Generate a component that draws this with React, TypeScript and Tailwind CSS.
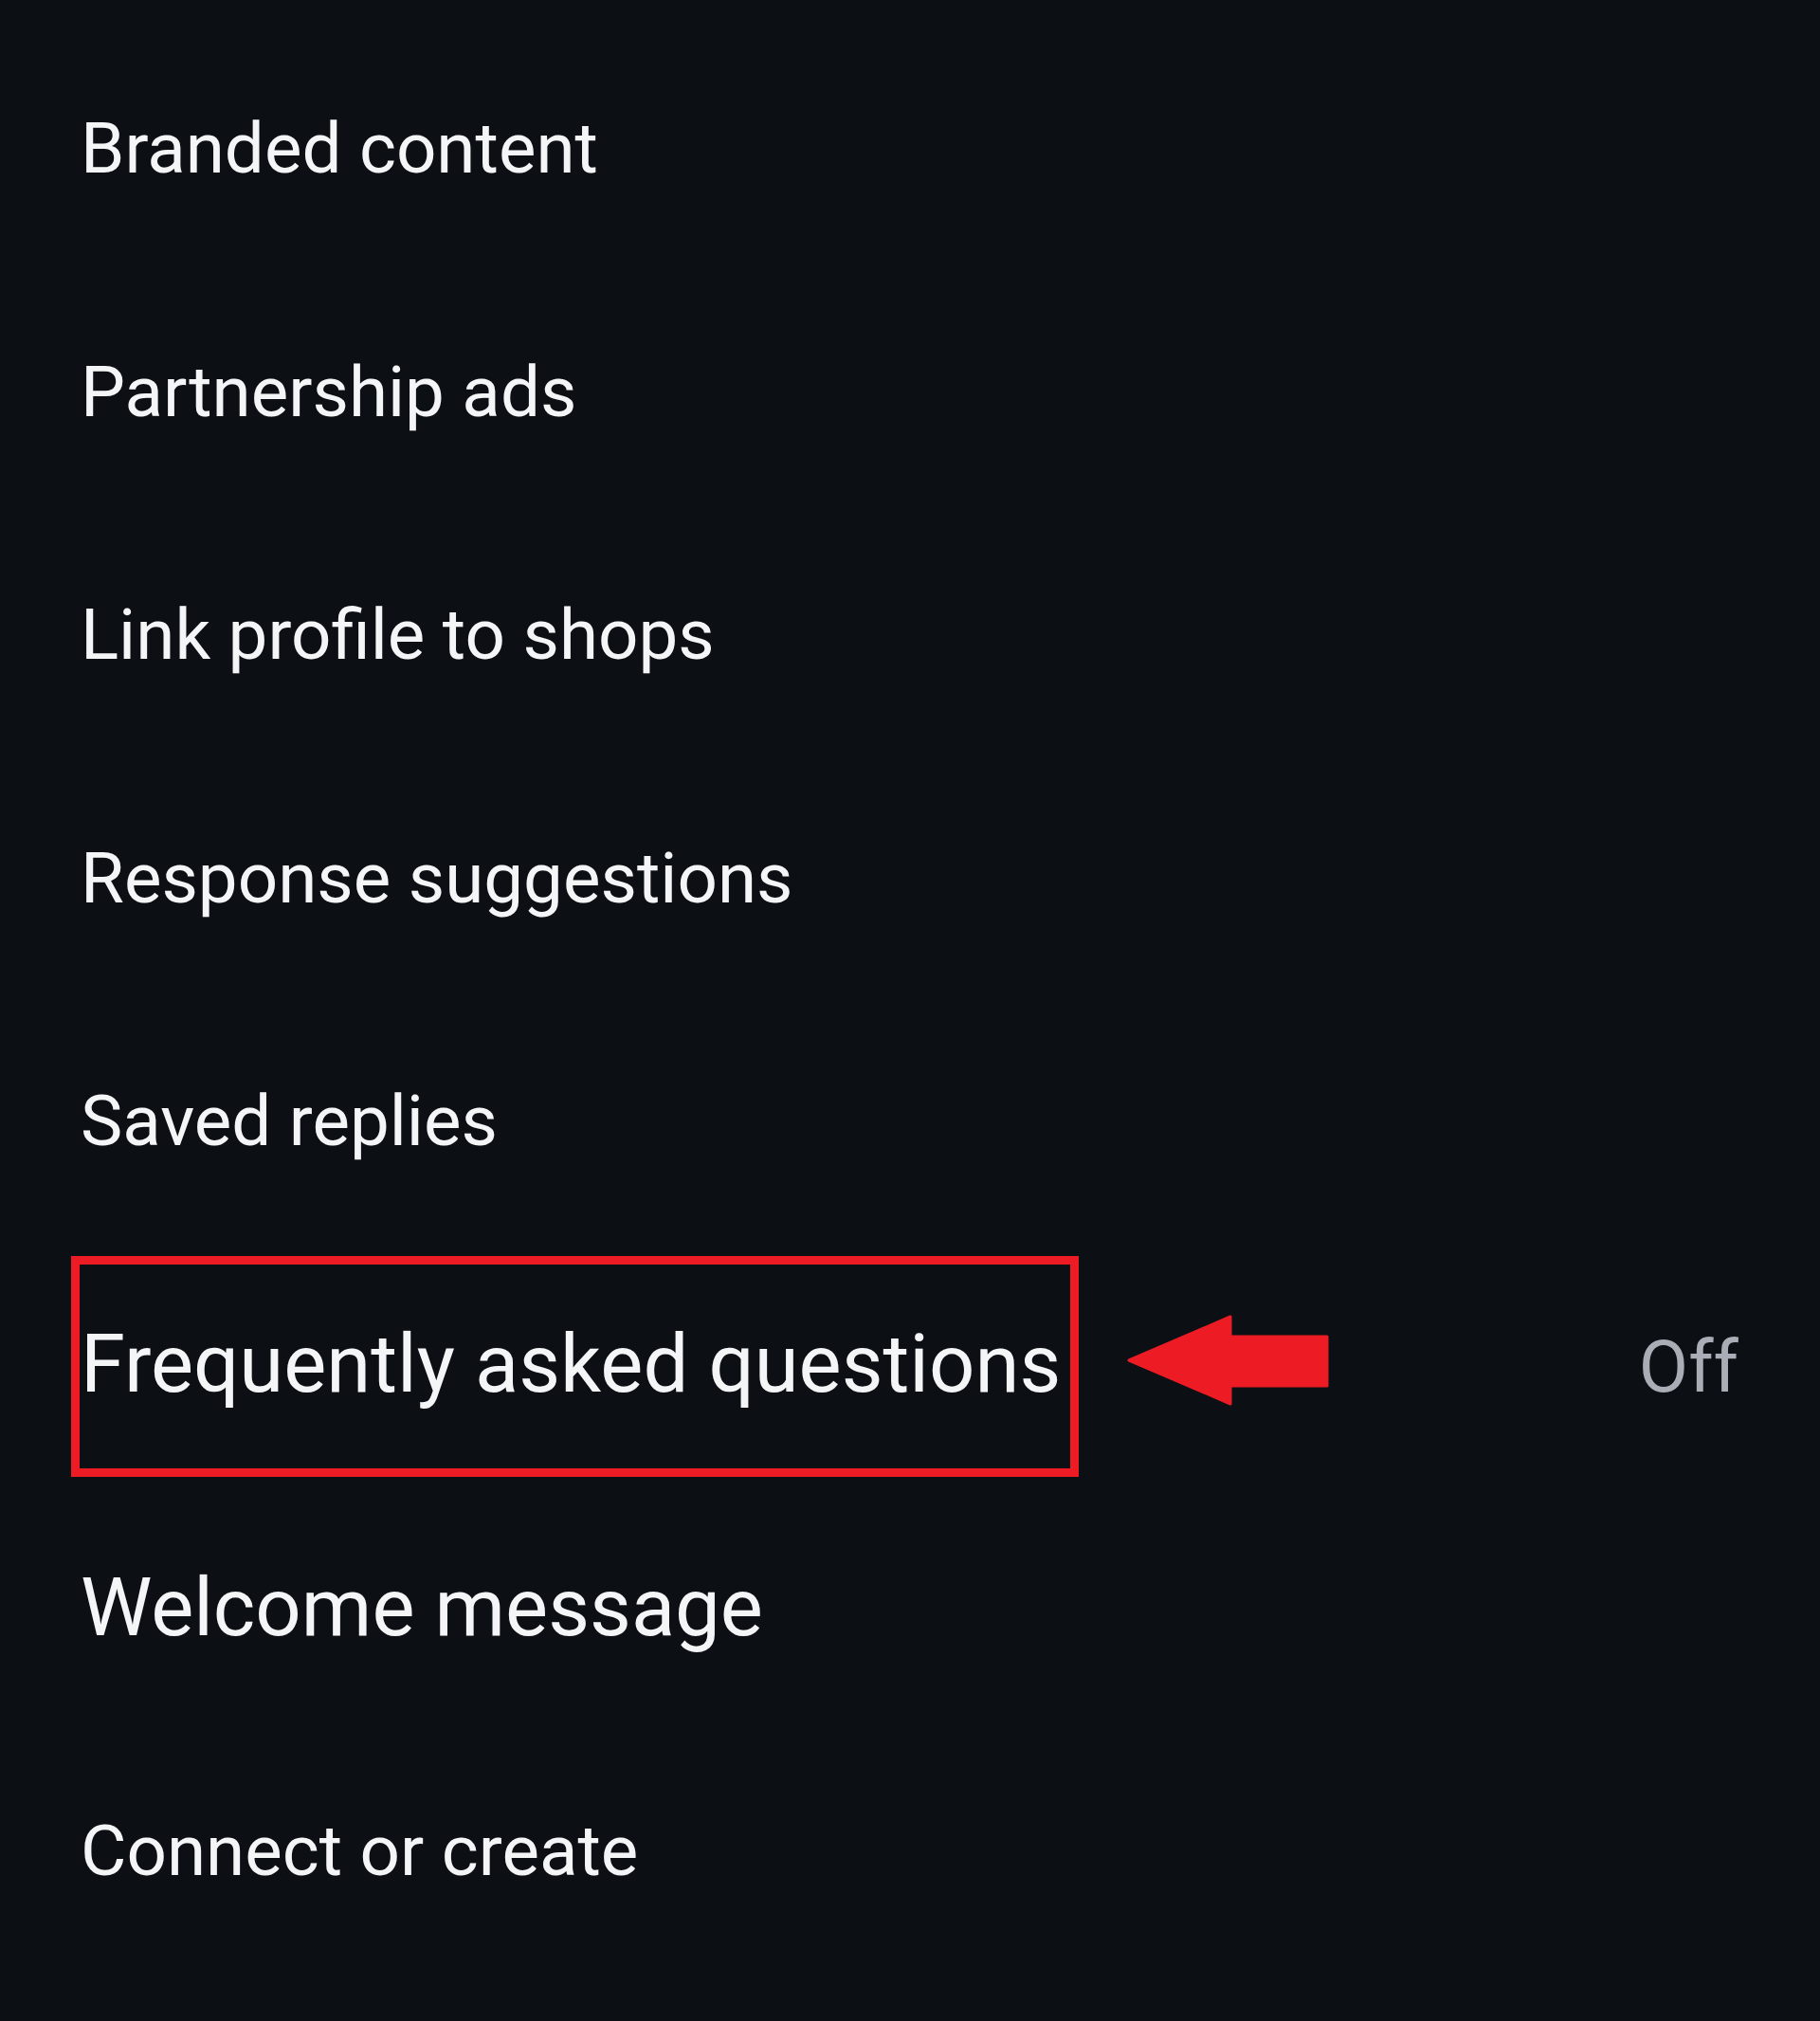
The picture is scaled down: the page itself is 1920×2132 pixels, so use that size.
const rows = [
  { label: "Branded content", size: "text-[74.5px]" },
  { label: "Partnership ads", size: "text-[74.5px]" },
  { label: "Link profile to shops", size: "text-[74.5px]" },
  { label: "Response suggestions", size: "text-[74.5px]" },
  { label: "Saved replies", size: "text-[74.5px]" },
  { label: "Frequently asked questions", size: "text-[85px]", value: "Off", marked: true },
  { label: "Welcome message", size: "text-[85px]" },
  { label: "Connect or create", size: "text-[74.5px]" },
];

function LeftArrow() {
  return (
    <svg
      className="absolute left-[1188px] top-[72px]"
      width="216"
      height="102"
      viewBox="0 0 216 102"
    >
      <polygon
        points="3,51 110,5 110,26 212,26 212,78 110,78 110,97"
        fill="#ed1c24"
        stroke="#ed1c24"
        strokeWidth="3"
        strokeLinejoin="round"
      />
    </svg>
  );
}

export default function App() {
  return (
    <div
      className="w-[1920px] h-[2132px] bg-[#0c0f14] pt-[29px] overflow-hidden"
      style={{ fontFamily: "Roboto, 'Noto Sans', sans-serif" }}
    >
      {rows.map((row) => (
        <div
          key={row.label}
          className="relative h-[256.5px] flex flex-col justify-center pl-[85px] pr-[82px]"
        >
          {row.marked && (
            <div className="absolute left-[75px] top-[13px] w-[1063px] h-[233px] border-[9px] border-[#ed1c24]" />
          )}
          {row.marked && <LeftArrow />}
          <div className="relative flex items-baseline justify-between">
            <span className={`${row.size} leading-none text-[#f4f5f7]`}>
              {row.label}
            </span>
            {row.value && (
              <span className="text-[76px] leading-none text-[#a9aeb6] pr-[4px]">
                {row.value}
              </span>
            )}
          </div>
        </div>
      ))}
    </div>
  );
}
